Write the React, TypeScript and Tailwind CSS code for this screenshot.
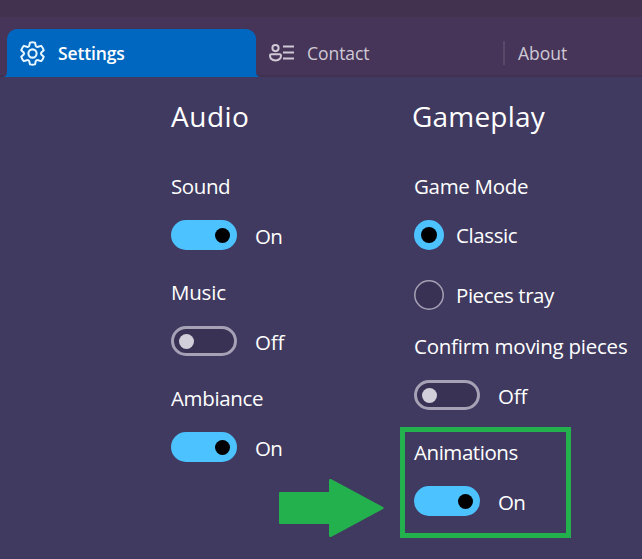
import type { ReactNode } from "react";

function Label({ children, className = "" }: { children: ReactNode; className?: string }) {
  return <div className={`h-[30px] whitespace-nowrap text-[20.5px] leading-[30px] ${className}`}>{children}</div>;
}

function Toggle({ on }: { on: boolean }) {
  return (
    <div className="flex h-[30px] items-center gap-[18px]">
      {on ? (
        <div className="flex h-[30px] w-[66px] items-center justify-end rounded-full bg-[#4cc2ff] pr-[7px]">
          <div className="size-[15px] rounded-full bg-black" />
        </div>
      ) : (
        <div className="flex h-[30px] w-[66px] items-center rounded-full border-3 border-[#a6a1b5] bg-[#3a3254] pl-[5px]">
          <div className="size-[15px] rounded-full bg-[#d2cfda]" />
        </div>
      )}
      <span className={`pt-[2px] text-[20.5px] leading-[30px] ${on ? "tracking-[-0.8px]" : "tracking-[-0.2px]"}`}>
        {on ? "On" : "Off"}
      </span>
    </div>
  );
}

function Radio({ checked, label, className }: { checked: boolean; label: string; className: string }) {
  return (
    <div className="flex h-[30px] items-center gap-3">
      {checked ? (
        <div className="flex size-[30px] items-center justify-center rounded-full bg-[#4cc2ff]">
          <div className="size-4 rounded-full bg-black" />
        </div>
      ) : (
        <svg className="size-[30px]" viewBox="0 0 30 30">
          <circle cx="15" cy="15" r="14.2" fill="#3a3254" stroke="#a6a1b5" strokeWidth="1.5" />
        </svg>
      )}
      <span className={`whitespace-nowrap text-[20.5px] leading-[30px] ${className}`}>{label}</span>
    </div>
  );
}

function GearIcon() {
  return (
    <svg className="size-[29px]" viewBox="0 0 24 24" fill="none" stroke="#e8f6ff" strokeWidth="1.7">
      <path d="M9.9 3Q12 2.500 14.100 3L14.700 5.700Q15.300 6.900 16.600 6.500L19.200 5.700Q20.700 7.300 21.300 9.300L19.300 11.200Q18.600 12 19.300 12.800L21.300 14.700Q20.700 16.700 19.200 18.300L16.600 17.500Q15.300 17.100 14.700 18.300L14.100 21Q12 21.500 9.900 21L9.300 18.300Q8.700 17.100 7.400 17.500L4.800 18.300Q3.300 16.700 2.700 14.700L4.700 12.800Q5.400 12 4.700 11.200L2.700 9.300Q3.300 7.300 4.800 5.700L7.400 6.500Q8.700 6.900 9.300 5.700Z" strokeLinejoin="round" />
      <circle cx="12" cy="12" r="3.4" />
    </svg>
  );
}

function ContactIcon() {
  return (
    <svg className="h-[18px] w-[26px]" viewBox="0 0 26 18" fill="none" stroke="#cfc9d5" strokeWidth="2">
      <circle cx="6.5" cy="4.100" r="3.100" />
      <path d="M2.400 10.200h8.200a1.400 1.400 0 0 1 1.400 1.400c0 3-2.200 4.800-5.500 4.800S1 14.600 1 11.600a1.400 1.400 0 0 1 1.400-1.400Z" />
      <path d="M14 2.500h11M14 8.500h11M14 14.500h11" />
    </svg>
  );
}

export default function App() {
  return (
    <div className="h-[559px] w-[642px] overflow-hidden bg-[#403a60] font-['Open_Sans','Noto_Sans',sans-serif] text-white">
      <div className="h-[17px] bg-[#423250]" />
      <nav className="flex h-[60px] border-b-2 border-[#413150] bg-[#463558] pl-[7px] pt-3 text-[17.5px] text-[#cfc9d5]">
        <div className="relative flex h-12 w-[249px] items-center rounded-t-[10px] bg-[#0067c0] pl-[11px] text-white">
          <svg className="absolute -left-[5px] bottom-0 size-[5px]" viewBox="0 0 5 5">
            <path d="M5 0v5H0Q5 5 5 0Z" fill="#0067c0" />
          </svg>
          <svg className="absolute -right-[5px] bottom-0 size-[5px]" viewBox="0 0 5 5">
            <path d="M0 0v5h5Q0 5 0 0Z" fill="#0067c0" />
          </svg>
          <GearIcon />
          <span className="ml-[11px] pt-px font-semibold tracking-[-0.150px]">Settings</span>
        </div>
        <div className="flex h-12 w-[247px] items-center pl-[13px]">
          <ContactIcon />
          <span className="ml-3 pt-px tracking-[-0.050px]">Contact</span>
        </div>
        <div className="flex h-12 items-center">
          <div className="h-6 w-[2px] bg-[#584968]" />
          <span className="ml-[13px] pt-px">About</span>
        </div>
      </nav>

      <main className="flex pl-[171px] pt-[19px]">
        <section className="w-[243px]">
          <h2 className="h-10 text-[28px] leading-10 tracking-[0.5px]">Audio</h2>
          <div className="mt-[35px] flex flex-col gap-[27px]">
            <div className="flex flex-col gap-[19px]">
              <Label className="tracking-[-0.4px]">Sound</Label>
              <Toggle on />
            </div>
            <div className="flex flex-col gap-[19px]">
              <Label className="tracking-[-0.2px]">Music</Label>
              <Toggle on={false} />
            </div>
            <div className="flex flex-col gap-[19px]">
              <Label className="tracking-[-0.350px]">Ambiance</Label>
              <Toggle on />
            </div>
          </div>
        </section>

        <section className="relative w-[228px]">
          <h2 className="-ml-[2px] h-10 text-[28px] leading-10 tracking-[0.2px]">Gameplay</h2>
          <Label className="mt-[35px] tracking-[-0.3px]">Game Mode</Label>
          <div className="mt-[19px] flex flex-col gap-[30px]">
            <Radio checked label="Classic" className="tracking-[-0.4px]" />
            <Radio checked={false} label="Pieces tray" className="tracking-[-0.450px]" />
          </div>
          <div className="mt-[21px] flex flex-col gap-[27px]">
            <div className="flex flex-col gap-[19px]">
              <Label className="tracking-[-0.250px]">Confirm moving pieces</Label>
              <Toggle on={false} />
            </div>
            <div className="relative flex flex-col gap-[19px]">
              <Label className="tracking-[-0.450px]">Animations</Label>
              <Toggle on />
              <div className="absolute -left-[14px] -top-[10px] h-[111px] w-[171px] border-5 border-[#22b14c]" />
              <svg className="absolute -left-[135px] top-[42px] h-[58px] w-[105px]" viewBox="0 0 105 58" fill="#22b14c">
                <path d="M1 13H50V1Q50 0 52 0L104 28Q105.500 29 104 30L52 58Q50 58 50 57V45H1Q0 45 0 44V14Q0 13 1 13Z" />
              </svg>
            </div>
          </div>
        </section>
      </main>
    </div>
  );
}
